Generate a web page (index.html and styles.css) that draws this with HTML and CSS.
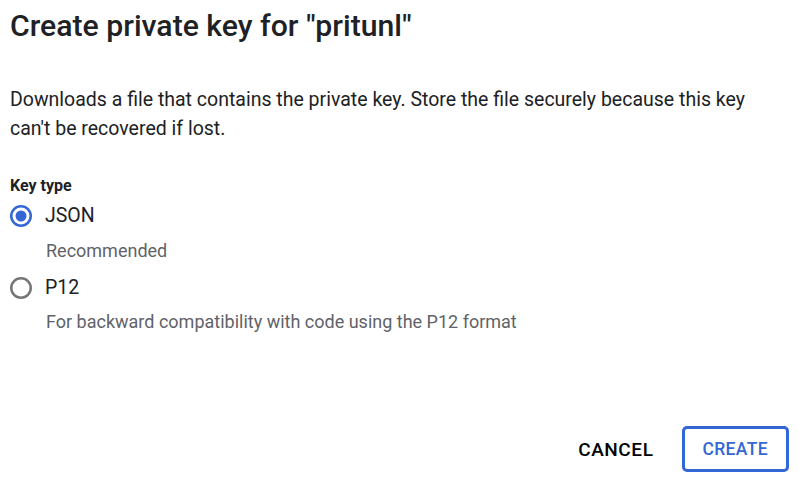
FILE: index.html
```html
<!DOCTYPE html>
<html lang="en">
<head>
<meta charset="utf-8">
<title>Create private key</title>
<link rel="stylesheet" href="styles.css">
</head>
<body>
<div class="dialog">
  <h1 class="title">Create private key for "pritunl"</h1>
  <p class="desc">Downloads a file that contains the private key. Store the file securely because this key can't be recovered if lost.</p>
  <div class="group-label">Key type</div>
  <div class="option option-first">
    <svg class="radio" viewBox="0 0 24 24" width="24" height="24"><circle cx="12" cy="12" r="9.75" fill="none" stroke="#3367d6" stroke-width="2.5"/><circle cx="12" cy="12" r="5.5" fill="#3367d6"/></svg>
    <span class="opt-label">JSON</span>
  </div>
  <div class="hint hint-first">Recommended</div>
  <div class="option option-second">
    <svg class="radio" viewBox="0 0 24 24" width="24" height="24"><circle cx="12" cy="12" r="9.75" fill="none" stroke="#757575" stroke-width="2.5"/></svg>
    <span class="opt-label">P12</span>
  </div>
  <div class="hint hint-second">For backward compatibility with code using the P12 format</div>
  <div class="actions">
    <button class="btn btn-cancel">CANCEL</button>
    <button class="btn btn-create">CREATE</button>
  </div>
</div>
</body>
</html>
```
FILE: styles.css
```css
html, body {
  margin: 0;
  padding: 0;
  background: #ffffff;
}
body {
  font-family: Roboto, "Liberation Sans", sans-serif;
  color: #202124;
}
.dialog {
  height: 480px;
  box-sizing: border-box;
  display: flex;
  flex-direction: column;
  padding: 8px 10px 8px 10px;
}
.title {
  margin: 0;
  font-size: 30.2px;
  line-height: 36px;
  font-weight: 500;
  color: #202124;
}
.desc {
  margin: 41px 0 0 0;
  font-size: 19.5px;
  line-height: 29px;
  color: #202124;
  width: 750px;
}
.group-label {
  margin-top: 33px;
  font-size: 16px;
  line-height: 20px;
  font-weight: 700;
  color: #202124;
}
.option {
  display: flex;
  align-items: center;
  gap: 12px;
  height: 24px;
  font-size: 19.5px;
  line-height: 24px;
  color: #202124;
}
.option-first { margin-top: 8px; }
.option-second { margin-top: 13px; }
.radio {
  display: block;
  flex: none;
  margin-left: -1px;
}
.hint {
  margin-left: 36px;
  font-size: 18px;
  line-height: 24px;
  color: #5f6368;
}
.hint-first { margin-top: 11px; }
.hint-second { margin-top: 10px; }
.actions {
  margin-top: auto;
  display: flex;
  justify-content: flex-end;
  gap: 8px;
}
.btn {
  height: 46px;
  box-sizing: border-box;
  border: 3px solid transparent;
  border-radius: 5px;
  background: #ffffff;
  font-family: Roboto, "Liberation Sans", sans-serif;
  font-size: 17.5px;
  font-weight: 500;
  letter-spacing: 0.02em;
  padding: 0 18px 0 17px;
  cursor: pointer;
}
.btn-cancel {
  color: #000000;
  font-size: 19px;
  letter-spacing: 0.03em;
  padding: 0 18px 0 17px;
}
.btn-create {
  color: #3367d6;
  border-color: #3367d6;
}
```
